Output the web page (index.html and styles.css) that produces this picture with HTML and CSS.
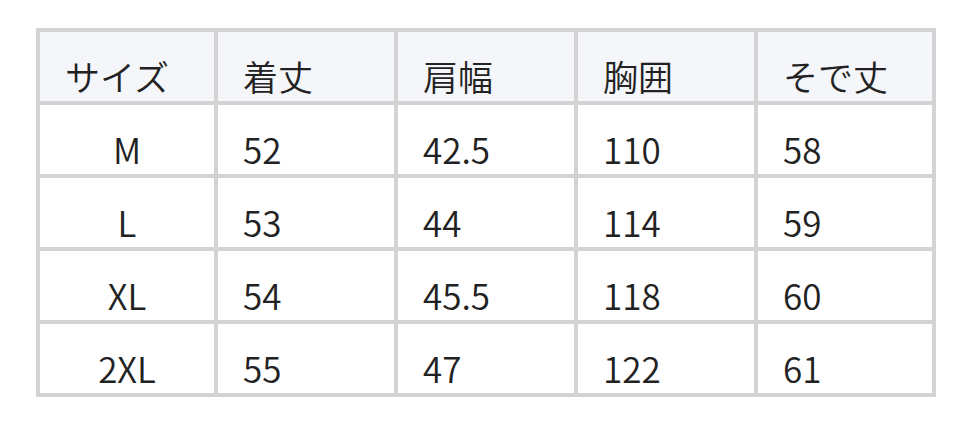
FILE: index.html
```html
<!DOCTYPE html>
<html lang="ja">
<head>
<meta charset="utf-8">
<link rel="stylesheet" href="styles.css">
</head>
<body>
<div class="wrap">
<table class="size-table">
<colgroup>
<col class="col-edge"><col class="col-mid"><col class="col-mid"><col class="col-mid"><col class="col-edge">
</colgroup>
<thead>
<tr><th>サイズ</th><th>着丈</th><th>肩幅</th><th>胸囲</th><th>そで丈</th></tr>
</thead>
<tbody>
<tr><td class="size">M</td><td>52</td><td>42.5</td><td>110</td><td>58</td></tr>
<tr><td class="size">L</td><td>53</td><td>44</td><td>114</td><td>59</td></tr>
<tr><td class="size">XL</td><td>54</td><td>45.5</td><td>118</td><td>60</td></tr>
<tr><td class="size">2XL</td><td>55</td><td>47</td><td>122</td><td>61</td></tr>
</tbody>
</table>
</div>
</body>
</html>
```
FILE: styles.css
```css
html, body {
  margin: 0;
  padding: 0;
  background: #ffffff;
}
.wrap {
  padding: 28px 36px;
}
.size-table {
  width: 900px;
  border-collapse: separate;
  border-spacing: 0;
  border: 2px solid #d3d3d3;
  table-layout: fixed;
  font-family: "Noto Sans CJK JP", "Noto Sans", sans-serif;
  font-size: 35px;
  font-weight: 350;
  color: #222222;
}
.col-edge {
  width: 178px;
}
.col-mid {
  width: 180px;
}
.size-table th,
.size-table td {
  border: 2px solid #d3d3d3;
  height: 49px;
  line-height: 48px;
  padding: 20px 0 0 25px;
  text-align: left;
  font-weight: 350;
  vertical-align: top;
}
.size-table th {
  background: #f5f6fa;
}
.size-table td.size {
  text-align: center;
  padding-left: 0;
}
```
